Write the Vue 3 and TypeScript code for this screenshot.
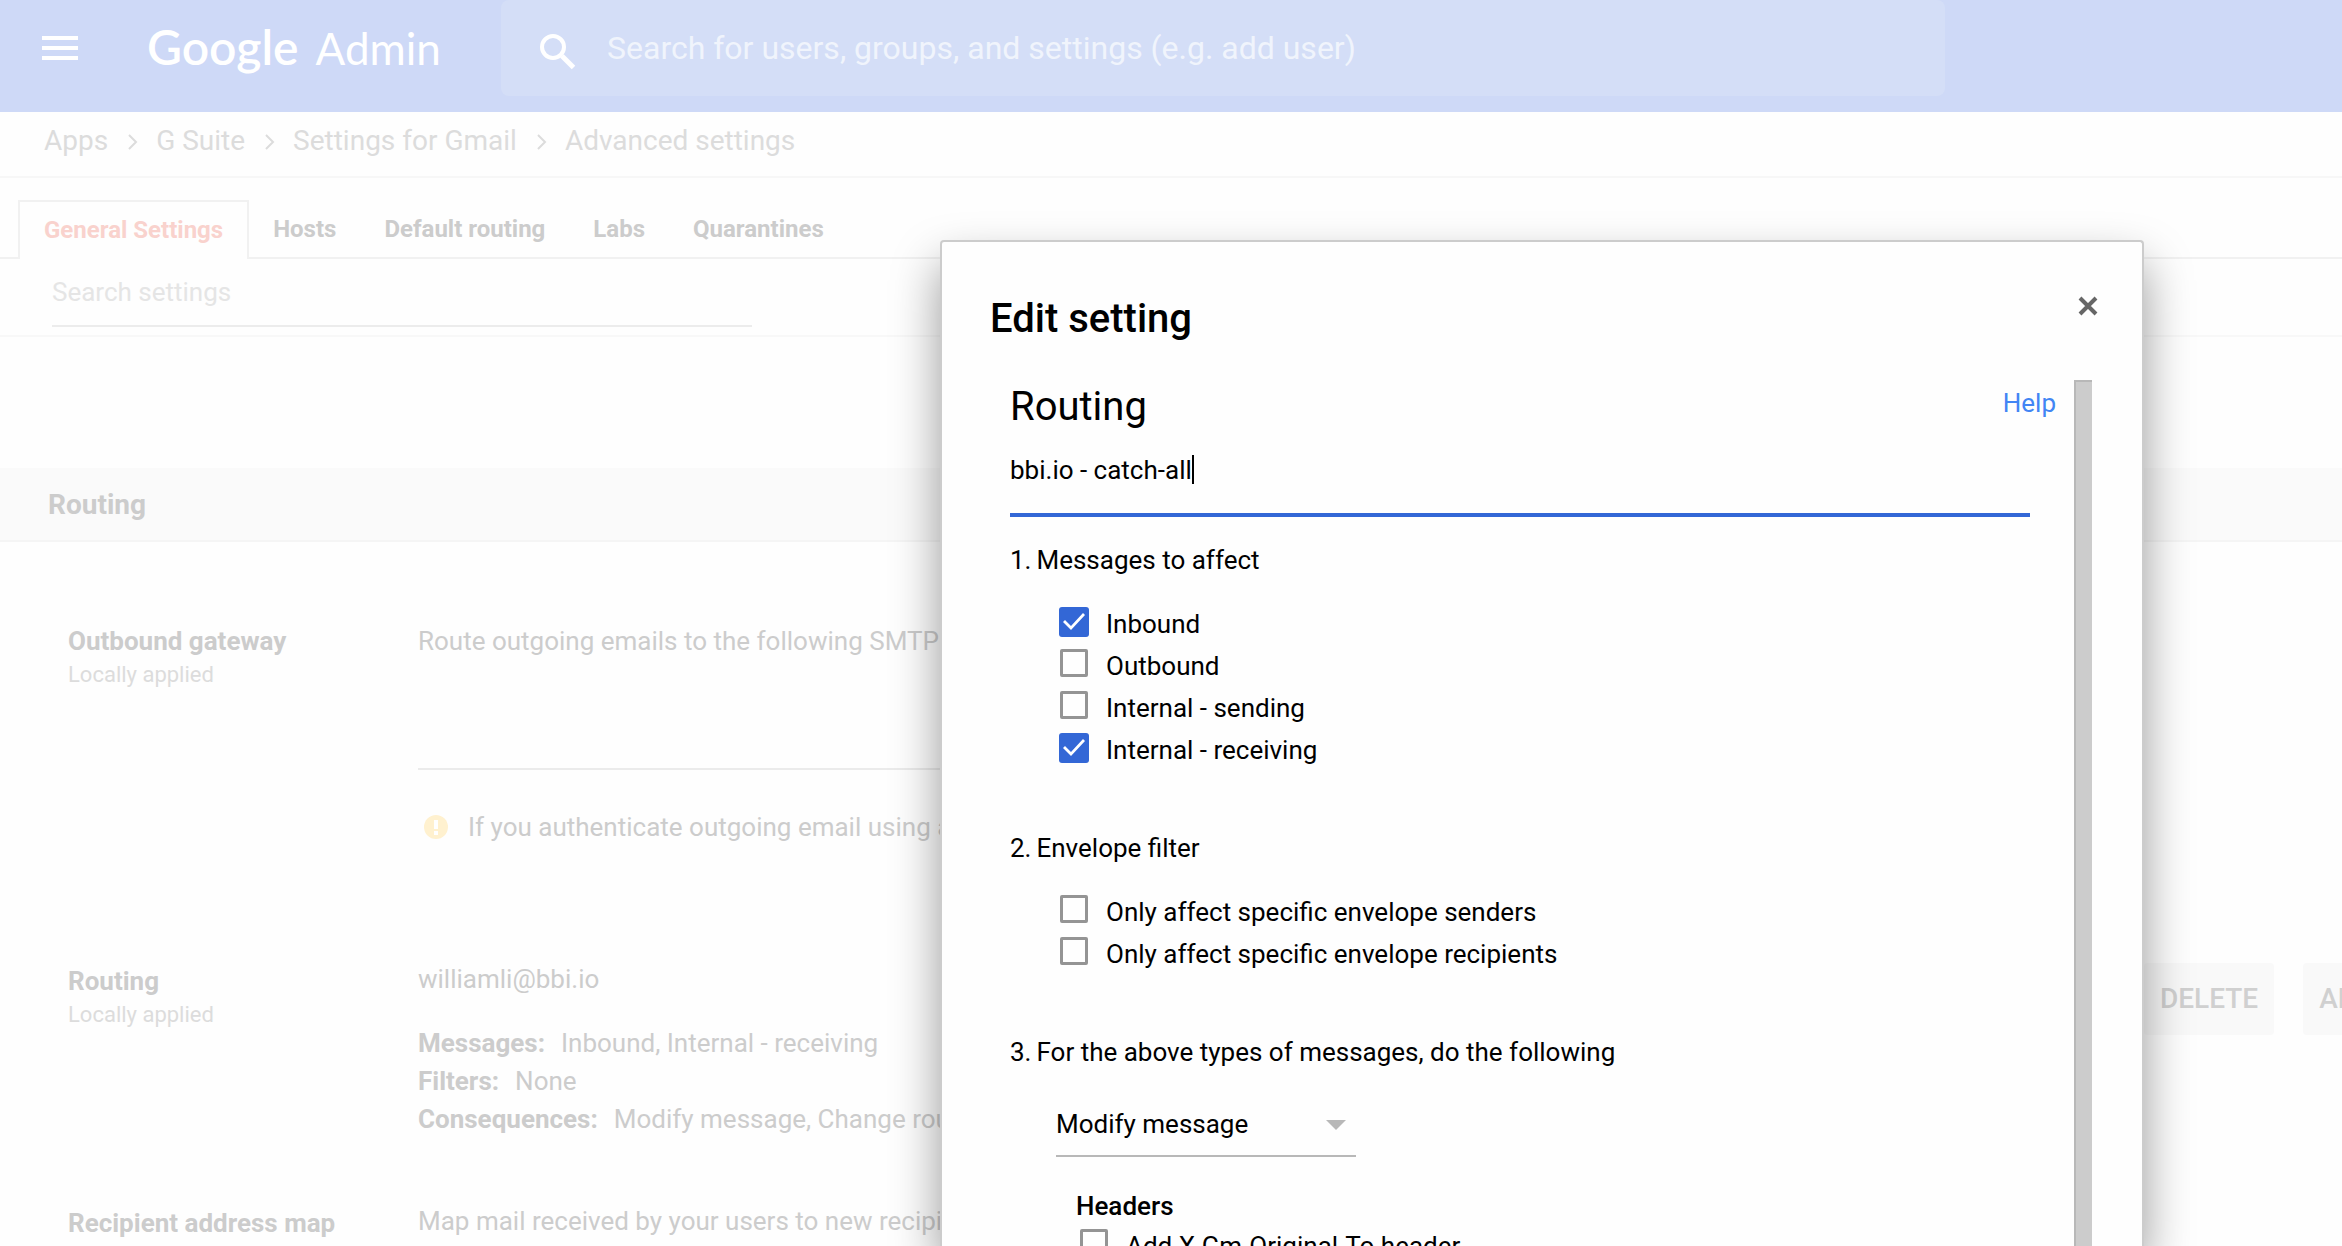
<script setup lang="ts">
import { reactive, ref } from 'vue'

interface Option {
  id: string
  label: string
  checked: boolean
}

const crumbs: string[] = ['Apps', 'G Suite', 'Settings for Gmail', 'Advanced settings']
const tabs: string[] = ['General Settings', 'Hosts', 'Default routing', 'Labs', 'Quarantines']
const activeTab = ref('General Settings')

const summary = [
  { term: 'Messages:', value: 'Inbound, Internal - receiving' },
  { term: 'Filters:', value: 'None' },
  { term: 'Consequences:', value: 'Modify message, Change route' },
]

const open = ref(true)
const ruleName = ref('bbi.io - catch-all')
const action = ref('modify')

const messages = reactive<Option[]>([
  { id: 'inbound', label: 'Inbound', checked: true },
  { id: 'outbound', label: 'Outbound', checked: false },
  { id: 'internal-sending', label: 'Internal - sending', checked: false },
  { id: 'internal-receiving', label: 'Internal - receiving', checked: true },
])
const envelope = reactive<Option[]>([
  { id: 'senders', label: 'Only affect specific envelope senders', checked: false },
  { id: 'recipients', label: 'Only affect specific envelope recipients', checked: false },
])
const headers = reactive<Option[]>([
  { id: 'original-to', label: 'Add X-Gm-Original-To header', checked: false },
])
</script>

<template>
  <div class="page">
    <header class="topbar">
      <button class="menu" type="button" aria-label="Main menu">
        <svg width="36" height="24" viewBox="0 0 36 24"><path d="M0 0h36v4H0zM0 10h36v4H0zM0 20h36v4H0z" fill="#fff" /></svg>
      </button>
      <a class="logo" href="#"><span class="brand">Google</span><span class="product">Admin</span></a>
      <form class="search" role="search" @submit.prevent>
        <svg class="glass" width="36" height="36" viewBox="0 0 36 36" fill="none" stroke="#fff">
          <circle cx="13" cy="13" r="11" stroke-width="4" />
          <path d="M22 22l11.500 11.500" stroke-width="5" />
        </svg>
        <input type="search" aria-label="Search" placeholder="Search for users, groups, and settings (e.g. add user)" />
      </form>
    </header>

    <nav class="crumbs" aria-label="Breadcrumb">
      <template v-for="(crumb, i) in crumbs" :key="crumb">
        <svg v-if="i > 0" class="chevron" width="10" height="16" viewBox="0 0 10 16" fill="none" stroke="#dcdcdc" stroke-width="2">
          <path d="M1 1l7 7-7 7" />
        </svg>
        <a href="#">{{ crumb }}</a>
      </template>
    </nav>

    <div class="tabs" role="tablist">
      <button
        v-for="tab in tabs"
        :key="tab"
        type="button"
        role="tab"
        class="tab"
        :class="{ active: tab === activeTab }"
        :aria-selected="tab === activeTab"
        @click="activeTab = tab"
      >{{ tab }}</button>
    </div>

    <div class="filter">
      <input type="text" aria-label="Search settings" placeholder="Search settings" />
    </div>

    <main>
      <h2 class="band">Routing</h2>

      <section class="row gateway">
        <div>
          <h3>Outbound gateway</h3>
          <p class="note">Locally applied</p>
        </div>
        <div>
          <p class="lead">Route outgoing emails to the following SMTP</p>
          <p class="warning">
            <svg width="24" height="24" viewBox="0 0 24 24">
              <circle cx="12" cy="12" r="12" fill="#fff1cf" />
              <path d="M10 5h4v9h-4zM10 16h4v4h-4z" fill="#fff" />
            </svg>
            If you authenticate outgoing email using a
          </p>
        </div>
      </section>

      <section class="row routing">
        <div class="title">
          <h3>Routing</h3>
          <p class="note">Locally applied</p>
        </div>
        <div>
          <p>williamli@bbi.io</p>
          <dl>
            <div v-for="line in summary" :key="line.term">
              <dt>{{ line.term }}</dt>
              <dd>{{ line.value }}</dd>
            </div>
          </dl>
        </div>
        <div class="actions">
          <button type="button">DELETE</button>
          <button type="button">ADD ANOTHER</button>
        </div>
      </section>

      <section class="row">
        <div class="title">
          <h3>Recipient address map</h3>
        </div>
        <p>Map mail received by your users to new recipients</p>
      </section>
    </main>

    <div v-if="open" class="dialog" role="dialog" aria-labelledby="dialog-title">
      <div class="dialog-head">
        <h1 id="dialog-title">Edit setting</h1>
        <button class="close" type="button" aria-label="Close" @click="open = false">
          <svg width="20" height="20" viewBox="0 0 20 20"><path d="M2 2l16 16M18 2L2 18" stroke="#666" stroke-width="4" /></svg>
        </button>
      </div>
      <div class="dialog-body">
        <form class="content" @submit.prevent>
          <div class="heading">
            <h2>Routing</h2>
            <a href="#">Help</a>
          </div>
          <div class="name">
            <input v-model="ruleName" type="text" aria-label="Setting name" />
            <span class="caret"></span>
          </div>

          <section>
            <h3><span>1.</span>Messages to affect</h3>
            <ul>
              <li v-for="o in messages" :key="o.id">
                <input :id="o.id" v-model="o.checked" type="checkbox" />
                <label :for="o.id">{{ o.label }}</label>
              </li>
            </ul>
          </section>

          <section>
            <h3><span>2.</span>Envelope filter</h3>
            <ul>
              <li v-for="o in envelope" :key="o.id">
                <input :id="o.id" v-model="o.checked" type="checkbox" />
                <label :for="o.id">{{ o.label }}</label>
              </li>
            </ul>
          </section>

          <section>
            <h3><span>3.</span>For the above types of messages, do the following</h3>
            <div class="action">
              <select v-model="action" aria-label="Action">
                <option value="modify">Modify message</option>
              </select>
              <svg class="arrow" width="20" height="10" viewBox="0 0 20 10"><path d="M0 0h20L10 10z" fill="#b8b8b8" /></svg>
            </div>
            <div class="subgroup">
              <h4>Headers</h4>
              <ul>
                <li v-for="o in headers" :key="o.id">
                  <input :id="o.id" v-model="o.checked" type="checkbox" />
                  <label :for="o.id">{{ o.label }}</label>
                </li>
              </ul>
            </div>
          </section>
        </form>
        <div class="scrollbar"></div>
      </div>
    </div>
  </div>
</template>

<style>
body {
  margin: 0;
  background: #fefefe;
}
</style>

<style scoped>
.page {
  position: relative;
  height: 100vh;
  overflow: hidden;
  background: #fefefe;
  color: #cccccc;
  font: 26px/32px Roboto, "Liberation Sans", sans-serif;
}
h1, h2, h3, h4, p, ul, dl, dd {
  margin: 0;
  padding: 0;
}
ul {
  list-style: none;
}
a {
  color: inherit;
  text-decoration: none;
}
button, input, select {
  margin: 0;
  padding: 0;
  border: 0;
  border-radius: 0;
  outline: 0;
  background: none;
  color: inherit;
  font: inherit;
  appearance: none;
}

.topbar {
  display: flex;
  align-items: flex-start;
  height: 112px;
  padding: 0 397px 0 42px;
  box-sizing: border-box;
  background: #ced9f7;
}
.menu, .logo, .search {
  display: flex;
  align-items: center;
  height: 96px;
}
.logo {
  width: 354px;
  margin-left: 69px;
  align-items: baseline;
  line-height: 94px;
  color: #fff;
}
.brand {
  font-family: Lato, sans-serif;
  font-size: 48px;
  font-weight: 600;
}
.product {
  margin-left: 17px;
  font-family: Lato, sans-serif;
  font-size: 44px;
}
.search {
  flex: 1;
  border-radius: 8px;
  background: #d4def7;
}
.glass {
  margin: 8px 31px 0 39px;
}
.search input {
  flex: 1;
  height: 40px;
  font-size: 32px;
}
.search input::placeholder {
  color: #f0f4fc;
}

.crumbs {
  display: flex;
  padding: 13px 44px 19px;
  border-bottom: 2px solid #f7f7f7;
  color: #dcdcdc;
  font-size: 28px;
}
.chevron {
  margin: 9px 18px 0 20px;
}

.tabs {
  display: flex;
  padding: 22px 18px 0;
  border-bottom: 2px solid #f1f1f1;
}
.tab {
  margin-bottom: -2px;
  padding: 13px 24px 14px;
  font-size: 24px;
  font-weight: 700;
  line-height: 32px;
}
.tab.active {
  padding: 12px 24px 13px;
  border: 2px solid #f1f1f1;
  border-bottom: 0;
  background: #fefefe;
  color: #f9d2cd;
}

.filter {
  padding: 17px 52px 8px;
  border-bottom: 2px solid #f8f8f8;
}
.filter input {
  display: block;
  width: 700px;
  height: 32px;
  padding-bottom: 17px;
  border-bottom: 2px solid #ececec;
}
.filter input::placeholder {
  color: #e5e5e5;
}

main {
  padding-top: 131px;
}
.band {
  padding: 21px 48px 19px;
  border-bottom: 2px solid #f5f5f5;
  background: #fafafa;
  font-size: 28px;
}
.row {
  display: grid;
  grid-template-columns: 350px calc(100vw - 616px) auto;
  padding-left: 68px;
}
.row h3 {
  font-size: 26px;
}
.title {
  padding-top: 2px;
}
.gateway {
  padding-top: 83px;
  padding-bottom: 120px;
}
.routing {
  padding-bottom: 67px;
}
.note {
  margin-top: 2px;
  color: #dcdcdc;
  font-size: 22px;
}
.lead {
  padding-bottom: 111px;
  border-bottom: 2px solid #ebebeb;
}
.warning {
  display: flex;
  align-items: center;
  gap: 20px;
  padding: 41px 0 0 6px;
}
dl {
  margin-top: 29px;
  line-height: 38px;
}
dl div {
  display: flex;
  gap: 16px;
}
dt {
  font-weight: 700;
}
.actions {
  display: flex;
  align-items: flex-start;
  gap: 29px;
}
.actions button {
  padding: 20px 16px;
  border-radius: 4px;
  background: #f9f9f9;
  color: #d0d0d0;
  font-size: 28px;
  font-weight: 500;
  line-height: 32px;
  white-space: nowrap;
}

.dialog {
  position: absolute;
  top: 240px;
  right: 198px;
  bottom: 0;
  left: 940px;
  display: flex;
  flex-direction: column;
  border: 2px solid #cccccc;
  border-bottom: 0;
  border-radius: 4px 4px 0 0;
  background: #fefefe;
  box-shadow: 0 24px 48px rgba(0, 0, 0, 0.4);
  color: #000;
}
.dialog-head {
  display: flex;
  justify-content: space-between;
  align-items: flex-start;
  padding: 48px 38px 37px 48px;
}
.dialog-head h1 {
  padding-top: 5px;
  font-size: 40px;
  font-weight: 500;
  line-height: 48px;
}
.close {
  display: flex;
  align-items: center;
  justify-content: center;
  width: 32px;
  height: 32px;
}
.dialog-body {
  display: flex;
  flex: 1;
  min-height: 0;
  padding-right: 50px;
}
.content {
  flex: 1;
  overflow: hidden;
  padding: 3px 18px 0 68px;
}
.scrollbar {
  width: 16px;
  border-top: 2px solid #b8b8b8;
  border-left: 2px solid #b8b8b8;
  background: #cccccc;
}
.heading {
  display: flex;
  justify-content: space-between;
}
.heading h2 {
  font-size: 40px;
  font-weight: 400;
  line-height: 48px;
}
.heading a {
  padding-top: 4px;
  color: #4285f4;
}
.name {
  position: relative;
  margin: 23px 26px 27px 0;
}
.name input {
  display: block;
  width: 100%;
  height: 32px;
  padding-bottom: 27px;
  border-bottom: 4px solid #3367d6;
}
.caret {
  position: absolute;
  top: 1px;
  left: 182px;
  width: 2px;
  height: 29px;
  background: #000;
}
.content section {
  margin-bottom: 61px;
}
.content h3 {
  display: flex;
  gap: 5px;
  font-size: 26px;
  font-weight: 400;
}
.content section > ul {
  margin-top: 27px;
  padding-left: 49px;
}
li {
  display: flex;
  align-items: flex-start;
  gap: 16px;
  line-height: 42px;
}
li input {
  box-sizing: border-box;
  width: 28px;
  height: 28px;
  margin: 4px 2px 0 1px;
  border: 3px solid #949494;
  border-radius: 2px;
}
li input:checked {
  width: 30px;
  height: 30px;
  margin-right: 1px;
  margin-left: 0;
  border: 0;
  border-radius: 3px;
  background: #3367d6;
}
li input:checked::before {
  content: "";
  display: block;
  width: 30px;
  height: 30px;
  background: #fff;
  clip-path: polygon(4px 15px, 6px 13px, 12px 19px, 24px 6px, 26px 8px, 12px 23px);
}
.action {
  position: relative;
  width: 300px;
  margin: 40px 0 33px 46px;
}
.action select {
  display: block;
  width: 100%;
  height: 49px;
  padding-bottom: 15px;
  border-bottom: 2px solid #b8b8b8;
}
.arrow {
  position: absolute;
  top: 12px;
  right: 10px;
}
.subgroup {
  padding-left: 66px;
}
.subgroup h4 {
  font-size: 26px;
  font-weight: 500;
}
.subgroup ul {
  margin-top: 3px;
  padding-left: 3px;
}
</style>
